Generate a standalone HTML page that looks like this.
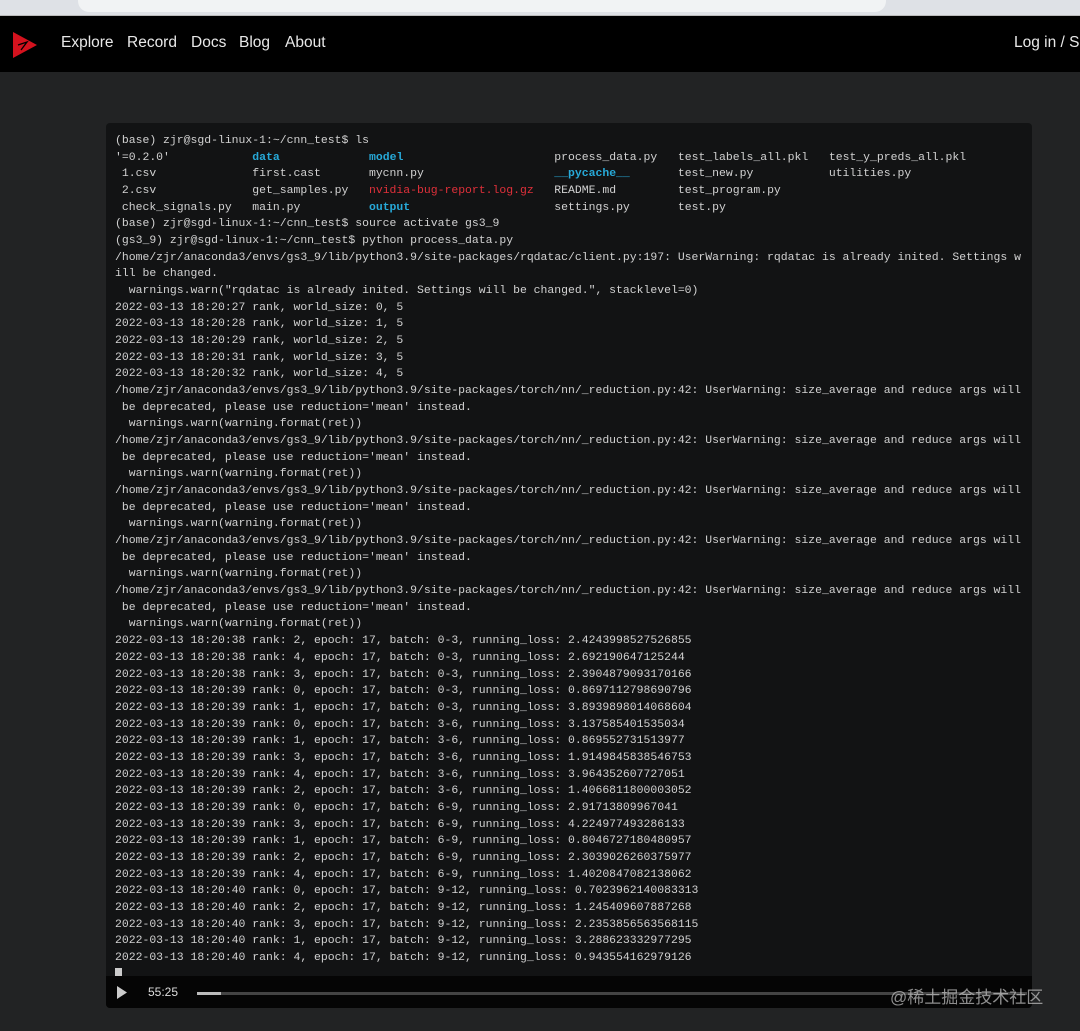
<!DOCTYPE html>
<html><head><meta charset="utf-8"><style>
body{margin:0;width:1080px;height:1031px;background:#222324;overflow:hidden;font-family:"Liberation Sans",sans-serif;position:relative}
.chrome{position:absolute;left:0;top:0;width:1080px;height:15px;background:#dee1e6;border-bottom:1px solid #bbb}
.url{position:absolute;left:78px;top:-10px;width:808px;height:22px;background:#f1f3f4;border-radius:12px}
.nav{position:absolute;left:0;top:16px;width:1080px;height:56px;background:#000}
.nav a{position:absolute;top:18px;color:#e8e8e8;font-size:15.5px;text-decoration:none;white-space:nowrap}
.term{position:absolute;left:106px;top:123px;width:926px;height:885px;background:#121314;border-radius:4px;overflow:hidden}
pre{margin:0;position:absolute;left:9px;top:10px;font-family:"Liberation Mono",monospace;font-size:11.45px;line-height:16.67px;color:#d2d2d2}
.b{color:#27a9d8;font-weight:bold}.r{color:#e0303a}
.ctrl{position:absolute;left:0;top:853px;width:926px;height:32px;background:#050505}
</style></head><body>
<div class="chrome"><div class="url"></div></div>
<div class="nav">
<svg style="position:absolute;left:13px;top:16px" width="24" height="26" viewBox="0 0 24 26"><path d="M0 0 L24 13 L0 26 Z" fill="#d4121e"/><path d="M5 13 L14 10 L8 18" stroke="#000" stroke-width="1.3" fill="none"/></svg>
<a style="left:61px">Explore</a><a style="left:127px">Record</a><a style="left:191px">Docs</a><a style="left:239px">Blog</a><a style="left:285px">About</a>
<a style="left:1014px">Log in / Sign</a>
</div>
<div class="term">
<pre>(base) zjr@sgd-linux-1:~/cnn_test$ ls
'=0.2.0'            <span class="b">data</span>             <span class="b">model</span>                      process_data.py   test_labels_all.pkl   test_y_preds_all.pkl
 1.csv              first.cast       mycnn.py                   <span class="b">__pycache__</span>       test_new.py           utilities.py
 2.csv              get_samples.py   <span class="r">nvidia-bug-report.log.gz</span>   README.md         test_program.py
 check_signals.py   main.py          <span class="b">output</span>                     settings.py       test.py
(base) zjr@sgd-linux-1:~/cnn_test$ source activate gs3_9
(gs3_9) zjr@sgd-linux-1:~/cnn_test$ python process_data.py
/home/zjr/anaconda3/envs/gs3_9/lib/python3.9/site-packages/rqdatac/client.py:197: UserWarning: rqdatac is already inited. Settings w
ill be changed.
  warnings.warn("rqdatac is already inited. Settings will be changed.", stacklevel=0)
2022-03-13 18:20:27 rank, world_size: 0, 5
2022-03-13 18:20:28 rank, world_size: 1, 5
2022-03-13 18:20:29 rank, world_size: 2, 5
2022-03-13 18:20:31 rank, world_size: 3, 5
2022-03-13 18:20:32 rank, world_size: 4, 5
/home/zjr/anaconda3/envs/gs3_9/lib/python3.9/site-packages/torch/nn/_reduction.py:42: UserWarning: size_average and reduce args will
 be deprecated, please use reduction='mean' instead.
  warnings.warn(warning.format(ret))
/home/zjr/anaconda3/envs/gs3_9/lib/python3.9/site-packages/torch/nn/_reduction.py:42: UserWarning: size_average and reduce args will
 be deprecated, please use reduction='mean' instead.
  warnings.warn(warning.format(ret))
/home/zjr/anaconda3/envs/gs3_9/lib/python3.9/site-packages/torch/nn/_reduction.py:42: UserWarning: size_average and reduce args will
 be deprecated, please use reduction='mean' instead.
  warnings.warn(warning.format(ret))
/home/zjr/anaconda3/envs/gs3_9/lib/python3.9/site-packages/torch/nn/_reduction.py:42: UserWarning: size_average and reduce args will
 be deprecated, please use reduction='mean' instead.
  warnings.warn(warning.format(ret))
/home/zjr/anaconda3/envs/gs3_9/lib/python3.9/site-packages/torch/nn/_reduction.py:42: UserWarning: size_average and reduce args will
 be deprecated, please use reduction='mean' instead.
  warnings.warn(warning.format(ret))
2022-03-13 18:20:38 rank: 2, epoch: 17, batch: 0-3, running_loss: 2.4243998527526855
2022-03-13 18:20:38 rank: 4, epoch: 17, batch: 0-3, running_loss: 2.692190647125244
2022-03-13 18:20:38 rank: 3, epoch: 17, batch: 0-3, running_loss: 2.3904879093170166
2022-03-13 18:20:39 rank: 0, epoch: 17, batch: 0-3, running_loss: 0.8697112798690796
2022-03-13 18:20:39 rank: 1, epoch: 17, batch: 0-3, running_loss: 3.8939898014068604
2022-03-13 18:20:39 rank: 0, epoch: 17, batch: 3-6, running_loss: 3.137585401535034
2022-03-13 18:20:39 rank: 1, epoch: 17, batch: 3-6, running_loss: 0.869552731513977
2022-03-13 18:20:39 rank: 3, epoch: 17, batch: 3-6, running_loss: 1.9149845838546753
2022-03-13 18:20:39 rank: 4, epoch: 17, batch: 3-6, running_loss: 3.964352607727051
2022-03-13 18:20:39 rank: 2, epoch: 17, batch: 3-6, running_loss: 1.4066811800003052
2022-03-13 18:20:39 rank: 0, epoch: 17, batch: 6-9, running_loss: 2.91713809967041
2022-03-13 18:20:39 rank: 3, epoch: 17, batch: 6-9, running_loss: 4.224977493286133
2022-03-13 18:20:39 rank: 1, epoch: 17, batch: 6-9, running_loss: 0.8046727180480957
2022-03-13 18:20:39 rank: 2, epoch: 17, batch: 6-9, running_loss: 2.3039026260375977
2022-03-13 18:20:39 rank: 4, epoch: 17, batch: 6-9, running_loss: 1.4020847082138062
2022-03-13 18:20:40 rank: 0, epoch: 17, batch: 9-12, running_loss: 0.7023962140083313
2022-03-13 18:20:40 rank: 2, epoch: 17, batch: 9-12, running_loss: 1.245409607887268
2022-03-13 18:20:40 rank: 3, epoch: 17, batch: 9-12, running_loss: 2.2353856563568115
2022-03-13 18:20:40 rank: 1, epoch: 17, batch: 9-12, running_loss: 3.288623332977295
2022-03-13 18:20:40 rank: 4, epoch: 17, batch: 9-12, running_loss: 0.943554162979126
<span style="background:#ccc">&nbsp;</span></pre>
<div class="ctrl">
<svg style="position:absolute;left:10px;top:10px" width="12" height="13"><path d="M1 0 L11 6.5 L1 13Z" fill="#ccc"/></svg>
<span style="position:absolute;left:42px;top:9px;color:#ddd;font-size:12px">55:25</span>
<div style="position:absolute;left:91px;top:16px;width:830px;height:3px;background:#444"></div>
<div style="position:absolute;left:91px;top:16px;width:24px;height:3px;background:#bbb"></div>
</div>
</div>
<div style="position:absolute;left:890px;top:983px;color:rgba(200,200,200,.7);font-size:17px;font-family:'Liberation Sans','Noto Sans CJK SC',sans-serif">@稀土掘金技术社区</div>
</body></html>
